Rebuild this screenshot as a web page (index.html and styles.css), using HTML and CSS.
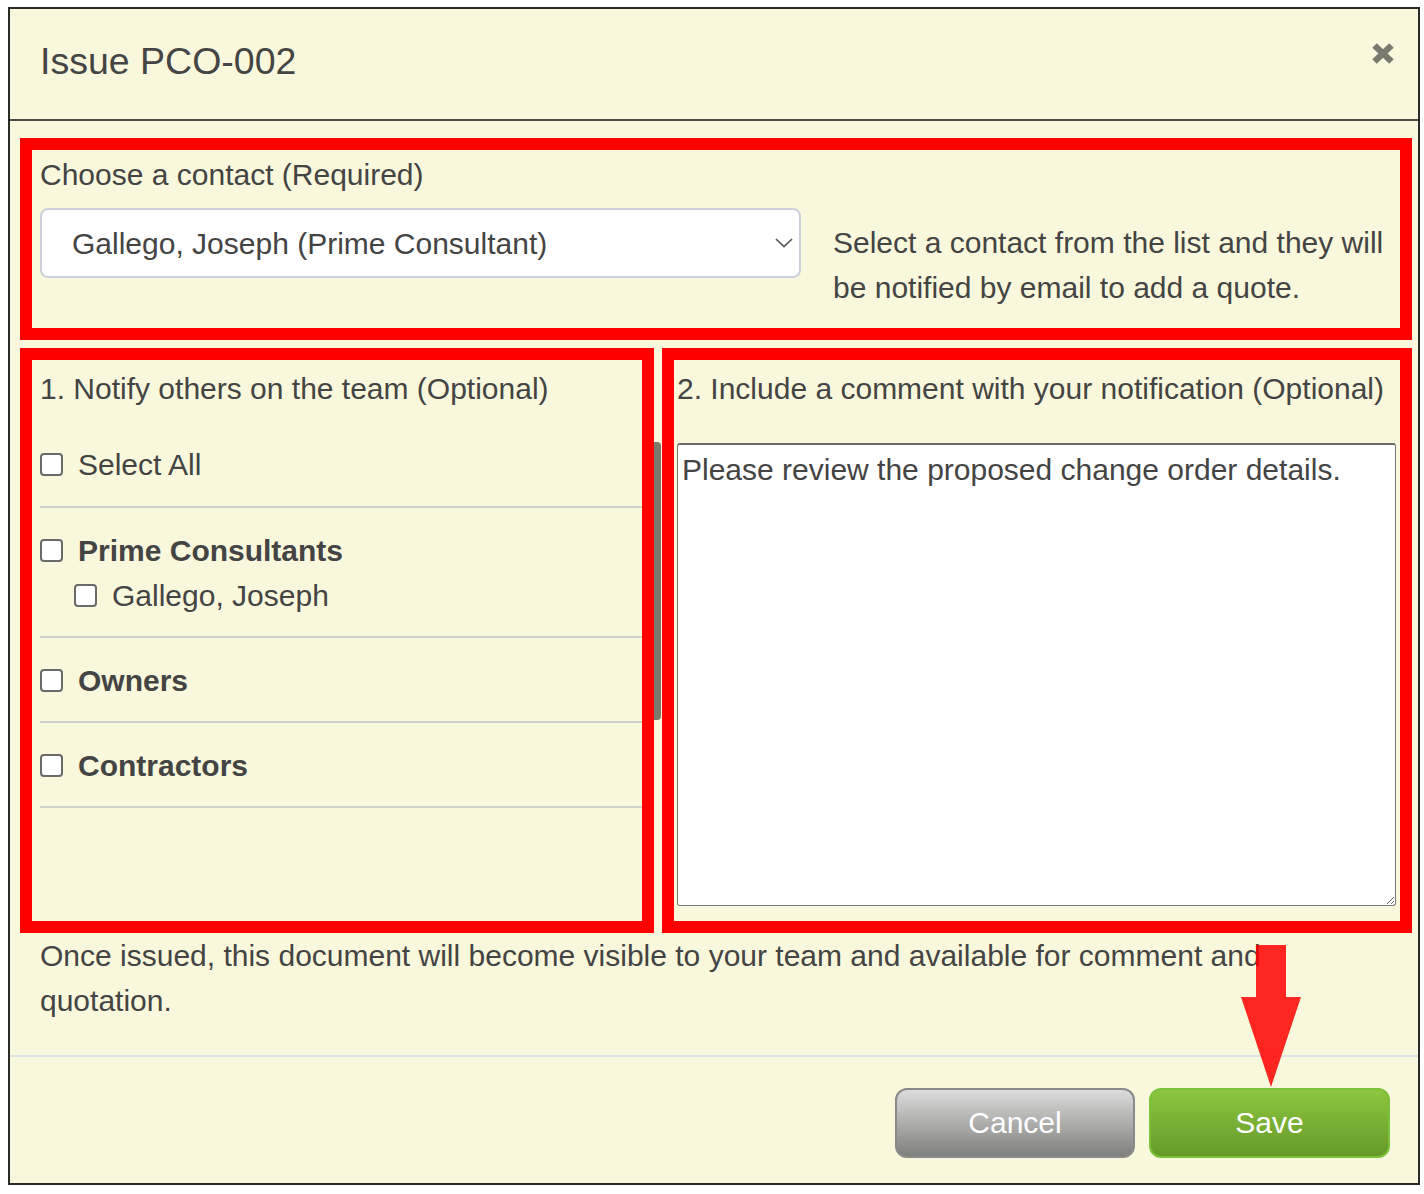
FILE: index.html
```html
<!DOCTYPE html>
<html lang="en">
<head>
<meta charset="utf-8">
<title>Issue PCO-002</title>
<link rel="stylesheet" href="styles.css">
</head>
<body>
<div class="dialog">
  <div class="dialog-header">
    <h1 class="dialog-title">Issue PCO-002</h1>
    <svg class="close-icon" width="24" height="23" viewBox="0 0 24 23" aria-label="Close">
      <line x1="3.5" y1="3.5" x2="20.5" y2="19.5" stroke="#7a796d" stroke-width="6.5"/>
      <line x1="20.5" y1="3.5" x2="3.5" y2="19.5" stroke="#7a796d" stroke-width="6.5"/>
    </svg>
  </div>

  <div class="dialog-body">
    <section class="red-box contact-box">
      <div class="label">Choose a contact (Required)</div>
      <div class="contact-row">
        <div class="select">
          <span>Gallego, Joseph (Prime Consultant)</span>
          <svg width="18" height="10" viewBox="0 0 18 10"><polyline points="1,1 9,8.5 17,1" fill="none" stroke="#555" stroke-width="1.7"/></svg>
        </div>
        <p class="help">Select a contact from the list and they will be notified by email to add a quote.</p>
      </div>
    </section>

    <div class="columns">
      <section class="red-box notify-box">
        <div class="label">1. Notify others on the team (Optional)</div>
        <div class="team-list">
          <div class="group group-all">
            <label class="row"><input type="checkbox" class="cb"><span>Select All</span></label>
          </div>
          <div class="group">
            <label class="row"><input type="checkbox" class="cb"><span class="bold">Prime Consultants</span></label>
            <label class="row sub"><input type="checkbox" class="cb"><span>Gallego, Joseph</span></label>
          </div>
          <div class="group">
            <label class="row"><input type="checkbox" class="cb"><span class="bold">Owners</span></label>
          </div>
          <div class="group">
            <label class="row"><input type="checkbox" class="cb"><span class="bold">Contractors</span></label>
          </div>
        </div>
      </section>
      <div class="scroll-gutter"><div class="thumb"></div></div>
      <section class="red-box comment-box">
        <div class="label">2. Include a comment with your notification (Optional)</div>
        <textarea class="comment">Please review the proposed change order details.</textarea>
      </section>
    </div>

    <p class="note">Once issued, this document will become visible to your team and available for comment and quotation.</p>
  </div>

  <div class="dialog-footer">
    <button class="btn btn-cancel">Cancel</button>
    <button class="btn btn-save">Save</button>
  </div>
</div>

<svg class="arrow" width="60" height="142" viewBox="0 0 60 142">
  <polygon points="15,0 45,0 45,52 60,52 30,142 0,52 15,52" fill="#ff0000" fill-opacity="0.85"/>
</svg>
</body>
</html>
```

FILE: styles.css
```css
* { box-sizing: border-box; }

html, body {
  margin: 0;
  padding: 0;
  background: #ffffff;
}

body {
  font-family: "Liberation Sans", Arial, Helvetica, sans-serif;
  color: #444444;
  font-size: 30px;
  line-height: 45px;
}

.dialog {
  margin: 7px 0 0 8px;
  width: 1412px;
  border: 2px solid #2a2a2a;
  background: #faf8dc;
}

.dialog-header {
  height: 112px;
  border-bottom: 2px solid #4a4a4a;
  display: flex;
  justify-content: space-between;
  align-items: flex-start;
  padding: 30px 23px 0 30px;
}

.dialog-title {
  margin: 0;
  font-size: 37.5px;
  line-height: 45px;
  font-weight: normal;
  color: #454545;
}

.close-icon {
  display: block;
  margin-top: 3px;
}

.dialog-body {
  padding: 17px 6px 0 10px;
}

.red-box {
  border: 12px solid #ff0000;
}

.contact-box {
  padding: 2px 8px 18px 8px;
}

.contact-row {
  display: flex;
  align-items: flex-start;
  margin-top: 11px;
}

.select {
  width: 761px;
  height: 70px;
  flex: none;
  background: #ffffff;
  border: 2px solid #cdd0d8;
  border-radius: 8px;
  display: flex;
  align-items: center;
  justify-content: space-between;
  padding: 0 6px 0 30px;
}

.select svg { display: block; }

.help {
  margin: 0 0 0 32px;
  padding-top: 12px;
}

.columns {
  margin-top: 8px;
  display: grid;
  grid-template-columns: 634px 8px 750px;
}

.notify-box {
  padding: 6px 0 0 8px;
}

.team-list {
  margin-top: 31px;
}

.group {
  padding: 20px 0 18px 0;
  border-bottom: 2px solid #cfcfcb;
}

.group-all {
  padding-top: 0;
  padding-bottom: 19px;
}

.row {
  display: flex;
  align-items: center;
  gap: 15px;
  height: 45px;
}

.row.sub {
  padding-left: 34px;
}

.cb {
  appearance: none;
  -webkit-appearance: none;
  margin: 0;
  width: 23px;
  height: 23px;
  flex: none;
  border: 2px solid #6a6a6a;
  border-radius: 4px;
  background: #ffffff;
}

.bold { font-weight: bold; }

.scroll-gutter {
  padding-top: 94px;
}

.thumb {
  width: 7px;
  height: 278px;
  background: #7b7a6c;
  border-radius: 0 4px 4px 0;
}

.comment-box {
  padding: 6px 0 15px 3px;
}

.comment {
  display: block;
  margin-top: 32px;
  width: 719px;
  height: 463px;
  font-family: "Liberation Sans", Arial, Helvetica, sans-serif;
  font-size: 30px;
  line-height: 45px;
  color: #444444;
  background: #ffffff;
  border: 1px solid #7a7a7a;
  border-top: 2px solid #6a6a6a;
  border-radius: 3px;
  padding: 2px 4px;
  resize: both;
  outline: none;
}

.note {
  margin: 0 20px 32px 20px;
}

.dialog-footer {
  border-top: 2px solid #dde2e4;
  display: flex;
  justify-content: flex-end;
  gap: 14px;
  padding: 31px 28px 25px 0;
}

.btn {
  height: 70px;
  font-family: "Liberation Sans", Arial, Helvetica, sans-serif;
  font-size: 30px;
  color: #ffffff;
  border-radius: 12px;
  padding: 0;
  cursor: pointer;
}

.btn-cancel {
  width: 240px;
  border: 2px solid #8a8a8a;
  background: linear-gradient(to bottom, #dcdcdc 0%, #a9a9a7 55%, #7f7f7d 100%);
}

.btn-save {
  width: 241px;
  border: 2px solid #7cc13a;
  background: linear-gradient(to bottom, #8dc63f 0%, #79b035 50%, #659a29 100%);
}

.arrow {
  position: absolute;
  left: 1241px;
  top: 945px;
}
```
